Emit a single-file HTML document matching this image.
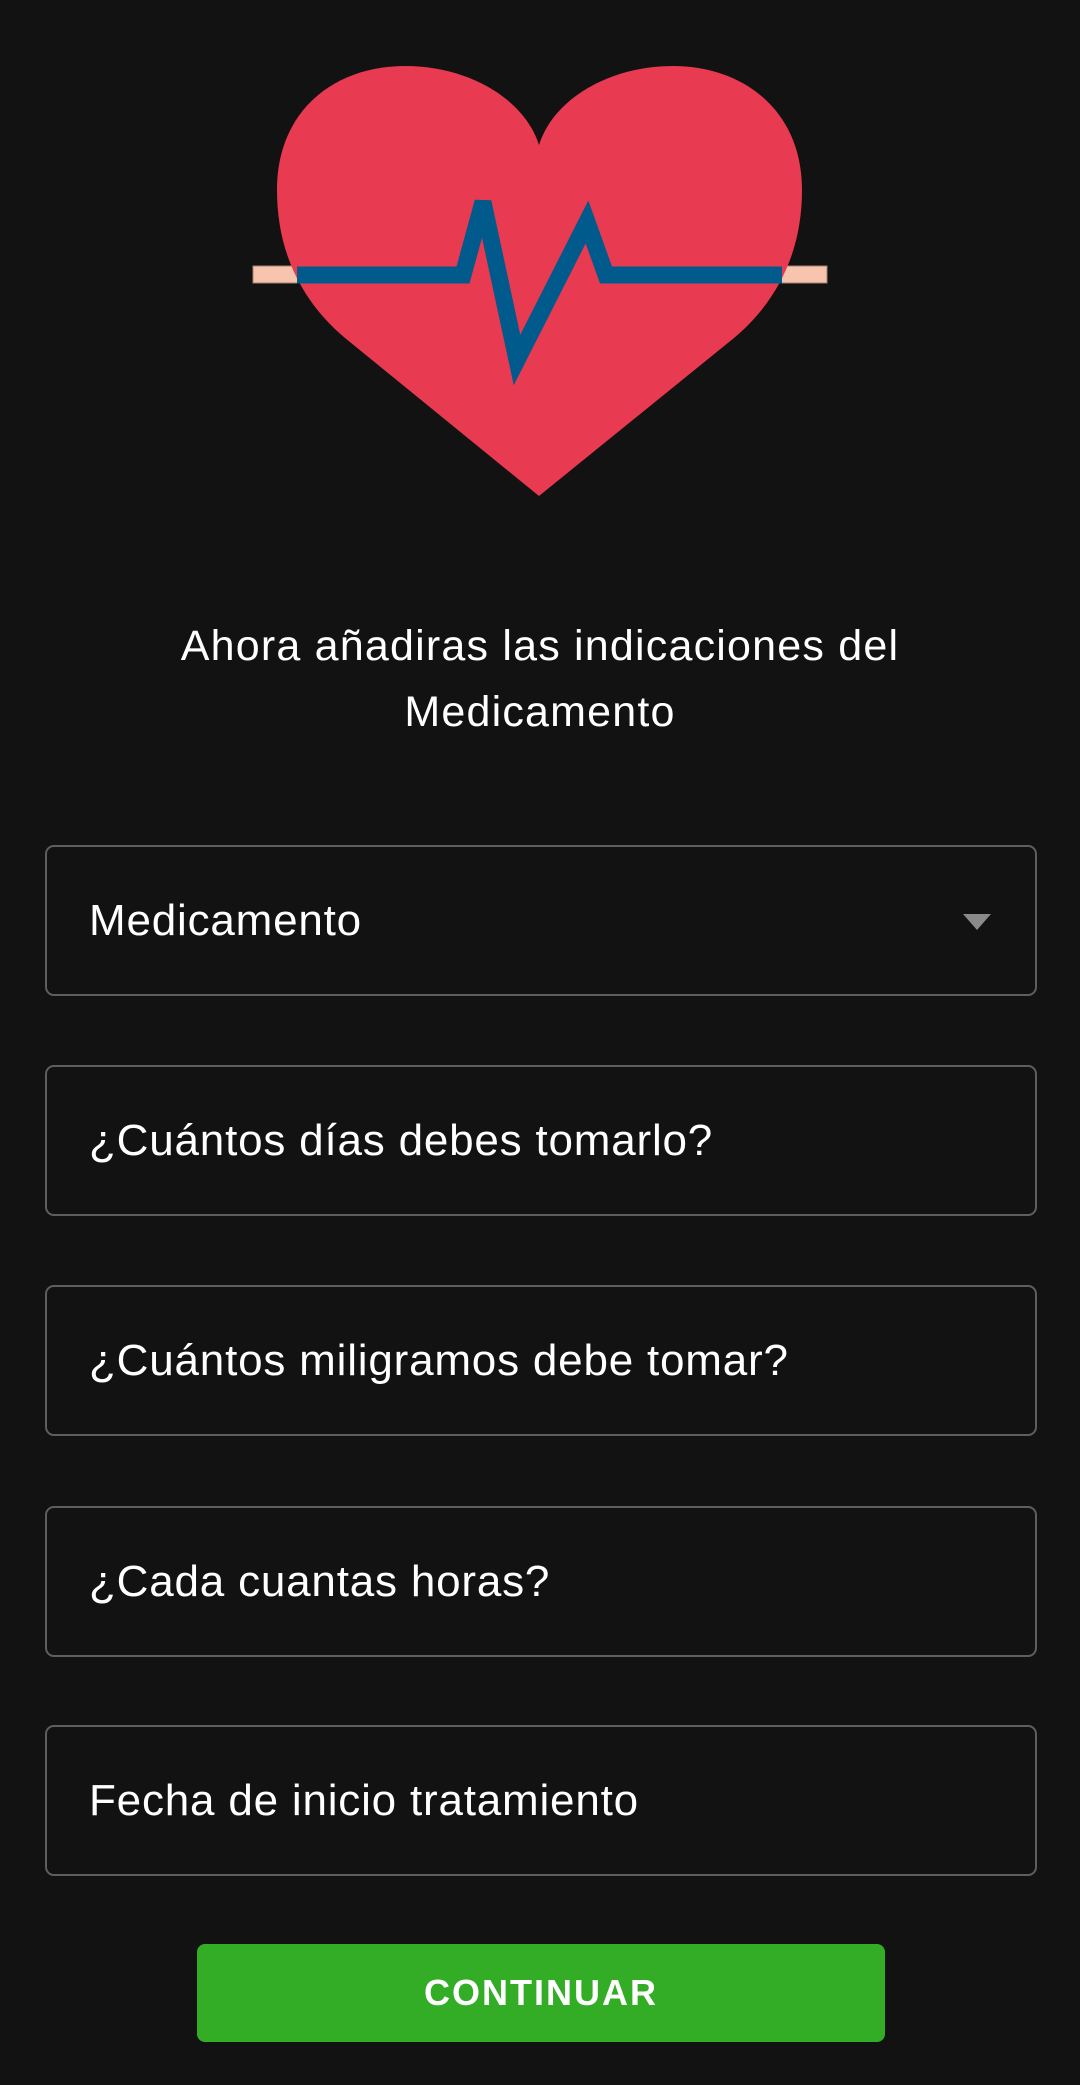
<!DOCTYPE html>
<html><head><meta charset="utf-8"><style>
html,body{margin:0;padding:0;background:#121212;}
body{width:1080px;height:2085px;position:relative;overflow:hidden;font-family:"Liberation Sans",Arial,sans-serif;color:#fff;}
.t{position:absolute;left:0;width:1080px;text-align:center;font-size:43px;line-height:66px;letter-spacing:1.2px;}
.f{position:absolute;left:45px;width:992px;height:151px;border:2px solid #5e5e5e;border-radius:9px;box-sizing:border-box;}
.f span{position:absolute;left:42px;top:0;line-height:147px;font-size:44px;letter-spacing:0.8px;}
.btn{position:absolute;left:197px;top:1944px;width:688px;height:98px;background:#34ad26;border-radius:8px;text-align:center;line-height:98px;font-size:36px;font-weight:bold;letter-spacing:2px;}
</style></head><body>
<svg style="position:absolute;left:0;top:0" width="1080" height="520" viewBox="0 0 1080 520">
<rect x="253" y="266" width="574" height="17" fill="#f7c4ae" stroke="#a08070" stroke-width="1"/>
<path d="M539 496 L345 338 C300 300 277 250 277 190 C277 110 335 66 405 66 C470 66 525 100 539 145 C553 100 608 66 673 66 C743 66 802 110 802 190 C802 250 779 300 734 338 Z" fill="#e83a50"/>
<polyline points="297,275 463,275 483,202 517,360 587,222 606,275 782,275" fill="none" stroke="#005a8c" stroke-width="17" stroke-linejoin="miter"/>
</svg>
<div class="t" style="top:613px">Ahora añadiras las indicaciones del</div>
<div class="t" style="top:679px">Medicamento</div>
<div class="f" style="top:845px"><span>Medicamento</span>
<svg style="position:absolute;left:916px;top:67px" width="30" height="18"><polygon points="0,0 28,0 14,16" fill="#8a8a8a"/></svg></div>
<div class="f" style="top:1065px"><span>¿Cuántos días debes tomarlo?</span></div>
<div class="f" style="top:1285px"><span>¿Cuántos miligramos debe tomar?</span></div>
<div class="f" style="top:1506px"><span>¿Cada cuantas horas?</span></div>
<div class="f" style="top:1725px"><span>Fecha de inicio tratamiento</span></div>
<div class="btn">CONTINUAR</div>
</body></html>
